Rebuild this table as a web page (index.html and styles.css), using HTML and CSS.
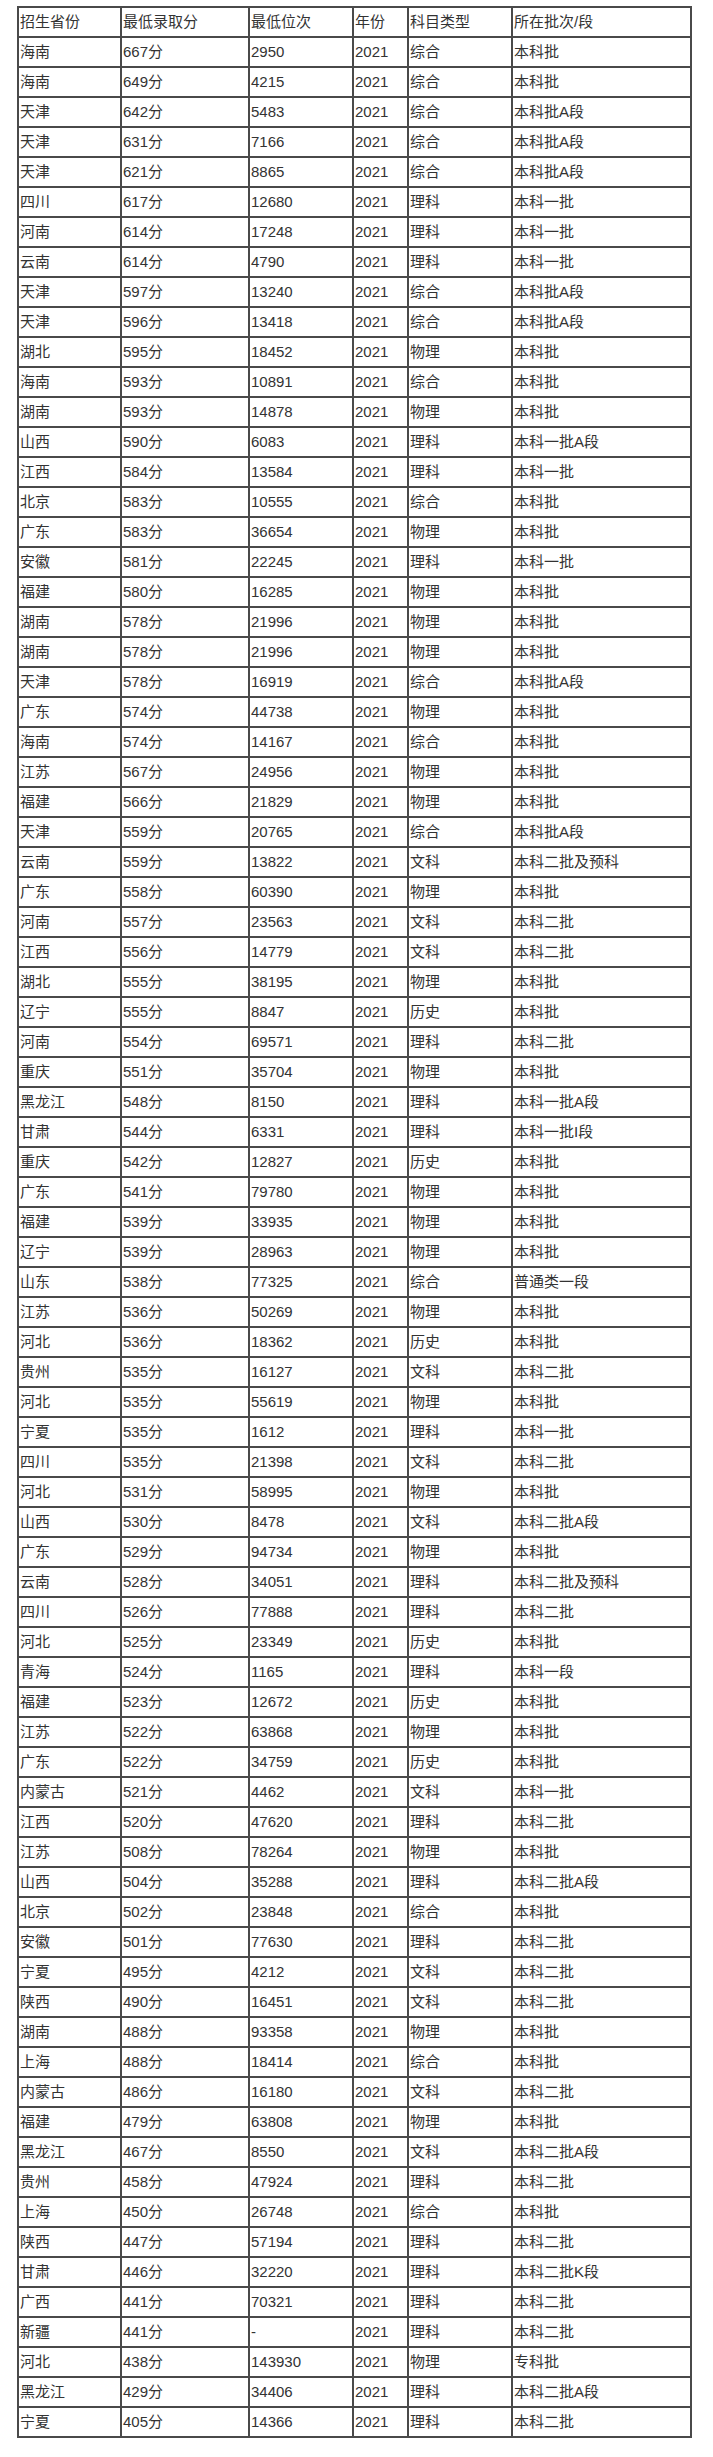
FILE: index.html
```html
<!DOCTYPE html>
<html lang="zh-CN">
<head>
<meta charset="utf-8">
<title>录取分数</title>
<link rel="stylesheet" href="styles.css">
</head>
<body>
<table class="score-table">
<colgroup>
<col class="c1"><col class="c2"><col class="c3"><col class="c4"><col class="c5"><col class="c6">
</colgroup>
<tbody>
<tr><td>招生省份</td><td>最低录取分</td><td>最低位次</td><td>年份</td><td>科目类型</td><td>所在批次/段</td></tr>
<tr><td>海南</td><td>667分</td><td>2950</td><td>2021</td><td>综合</td><td>本科批</td></tr>
<tr><td>海南</td><td>649分</td><td>4215</td><td>2021</td><td>综合</td><td>本科批</td></tr>
<tr><td>天津</td><td>642分</td><td>5483</td><td>2021</td><td>综合</td><td>本科批A段</td></tr>
<tr><td>天津</td><td>631分</td><td>7166</td><td>2021</td><td>综合</td><td>本科批A段</td></tr>
<tr><td>天津</td><td>621分</td><td>8865</td><td>2021</td><td>综合</td><td>本科批A段</td></tr>
<tr><td>四川</td><td>617分</td><td>12680</td><td>2021</td><td>理科</td><td>本科一批</td></tr>
<tr><td>河南</td><td>614分</td><td>17248</td><td>2021</td><td>理科</td><td>本科一批</td></tr>
<tr><td>云南</td><td>614分</td><td>4790</td><td>2021</td><td>理科</td><td>本科一批</td></tr>
<tr><td>天津</td><td>597分</td><td>13240</td><td>2021</td><td>综合</td><td>本科批A段</td></tr>
<tr><td>天津</td><td>596分</td><td>13418</td><td>2021</td><td>综合</td><td>本科批A段</td></tr>
<tr><td>湖北</td><td>595分</td><td>18452</td><td>2021</td><td>物理</td><td>本科批</td></tr>
<tr><td>海南</td><td>593分</td><td>10891</td><td>2021</td><td>综合</td><td>本科批</td></tr>
<tr><td>湖南</td><td>593分</td><td>14878</td><td>2021</td><td>物理</td><td>本科批</td></tr>
<tr><td>山西</td><td>590分</td><td>6083</td><td>2021</td><td>理科</td><td>本科一批A段</td></tr>
<tr><td>江西</td><td>584分</td><td>13584</td><td>2021</td><td>理科</td><td>本科一批</td></tr>
<tr><td>北京</td><td>583分</td><td>10555</td><td>2021</td><td>综合</td><td>本科批</td></tr>
<tr><td>广东</td><td>583分</td><td>36654</td><td>2021</td><td>物理</td><td>本科批</td></tr>
<tr><td>安徽</td><td>581分</td><td>22245</td><td>2021</td><td>理科</td><td>本科一批</td></tr>
<tr><td>福建</td><td>580分</td><td>16285</td><td>2021</td><td>物理</td><td>本科批</td></tr>
<tr><td>湖南</td><td>578分</td><td>21996</td><td>2021</td><td>物理</td><td>本科批</td></tr>
<tr><td>湖南</td><td>578分</td><td>21996</td><td>2021</td><td>物理</td><td>本科批</td></tr>
<tr><td>天津</td><td>578分</td><td>16919</td><td>2021</td><td>综合</td><td>本科批A段</td></tr>
<tr><td>广东</td><td>574分</td><td>44738</td><td>2021</td><td>物理</td><td>本科批</td></tr>
<tr><td>海南</td><td>574分</td><td>14167</td><td>2021</td><td>综合</td><td>本科批</td></tr>
<tr><td>江苏</td><td>567分</td><td>24956</td><td>2021</td><td>物理</td><td>本科批</td></tr>
<tr><td>福建</td><td>566分</td><td>21829</td><td>2021</td><td>物理</td><td>本科批</td></tr>
<tr><td>天津</td><td>559分</td><td>20765</td><td>2021</td><td>综合</td><td>本科批A段</td></tr>
<tr><td>云南</td><td>559分</td><td>13822</td><td>2021</td><td>文科</td><td>本科二批及预科</td></tr>
<tr><td>广东</td><td>558分</td><td>60390</td><td>2021</td><td>物理</td><td>本科批</td></tr>
<tr><td>河南</td><td>557分</td><td>23563</td><td>2021</td><td>文科</td><td>本科二批</td></tr>
<tr><td>江西</td><td>556分</td><td>14779</td><td>2021</td><td>文科</td><td>本科二批</td></tr>
<tr><td>湖北</td><td>555分</td><td>38195</td><td>2021</td><td>物理</td><td>本科批</td></tr>
<tr><td>辽宁</td><td>555分</td><td>8847</td><td>2021</td><td>历史</td><td>本科批</td></tr>
<tr><td>河南</td><td>554分</td><td>69571</td><td>2021</td><td>理科</td><td>本科二批</td></tr>
<tr><td>重庆</td><td>551分</td><td>35704</td><td>2021</td><td>物理</td><td>本科批</td></tr>
<tr><td>黑龙江</td><td>548分</td><td>8150</td><td>2021</td><td>理科</td><td>本科一批A段</td></tr>
<tr><td>甘肃</td><td>544分</td><td>6331</td><td>2021</td><td>理科</td><td>本科一批I段</td></tr>
<tr><td>重庆</td><td>542分</td><td>12827</td><td>2021</td><td>历史</td><td>本科批</td></tr>
<tr><td>广东</td><td>541分</td><td>79780</td><td>2021</td><td>物理</td><td>本科批</td></tr>
<tr><td>福建</td><td>539分</td><td>33935</td><td>2021</td><td>物理</td><td>本科批</td></tr>
<tr><td>辽宁</td><td>539分</td><td>28963</td><td>2021</td><td>物理</td><td>本科批</td></tr>
<tr><td>山东</td><td>538分</td><td>77325</td><td>2021</td><td>综合</td><td>普通类一段</td></tr>
<tr><td>江苏</td><td>536分</td><td>50269</td><td>2021</td><td>物理</td><td>本科批</td></tr>
<tr><td>河北</td><td>536分</td><td>18362</td><td>2021</td><td>历史</td><td>本科批</td></tr>
<tr><td>贵州</td><td>535分</td><td>16127</td><td>2021</td><td>文科</td><td>本科二批</td></tr>
<tr><td>河北</td><td>535分</td><td>55619</td><td>2021</td><td>物理</td><td>本科批</td></tr>
<tr><td>宁夏</td><td>535分</td><td>1612</td><td>2021</td><td>理科</td><td>本科一批</td></tr>
<tr><td>四川</td><td>535分</td><td>21398</td><td>2021</td><td>文科</td><td>本科二批</td></tr>
<tr><td>河北</td><td>531分</td><td>58995</td><td>2021</td><td>物理</td><td>本科批</td></tr>
<tr><td>山西</td><td>530分</td><td>8478</td><td>2021</td><td>文科</td><td>本科二批A段</td></tr>
<tr><td>广东</td><td>529分</td><td>94734</td><td>2021</td><td>物理</td><td>本科批</td></tr>
<tr><td>云南</td><td>528分</td><td>34051</td><td>2021</td><td>理科</td><td>本科二批及预科</td></tr>
<tr><td>四川</td><td>526分</td><td>77888</td><td>2021</td><td>理科</td><td>本科二批</td></tr>
<tr><td>河北</td><td>525分</td><td>23349</td><td>2021</td><td>历史</td><td>本科批</td></tr>
<tr><td>青海</td><td>524分</td><td>1165</td><td>2021</td><td>理科</td><td>本科一段</td></tr>
<tr><td>福建</td><td>523分</td><td>12672</td><td>2021</td><td>历史</td><td>本科批</td></tr>
<tr><td>江苏</td><td>522分</td><td>63868</td><td>2021</td><td>物理</td><td>本科批</td></tr>
<tr><td>广东</td><td>522分</td><td>34759</td><td>2021</td><td>历史</td><td>本科批</td></tr>
<tr><td>内蒙古</td><td>521分</td><td>4462</td><td>2021</td><td>文科</td><td>本科一批</td></tr>
<tr><td>江西</td><td>520分</td><td>47620</td><td>2021</td><td>理科</td><td>本科二批</td></tr>
<tr><td>江苏</td><td>508分</td><td>78264</td><td>2021</td><td>物理</td><td>本科批</td></tr>
<tr><td>山西</td><td>504分</td><td>35288</td><td>2021</td><td>理科</td><td>本科二批A段</td></tr>
<tr><td>北京</td><td>502分</td><td>23848</td><td>2021</td><td>综合</td><td>本科批</td></tr>
<tr><td>安徽</td><td>501分</td><td>77630</td><td>2021</td><td>理科</td><td>本科二批</td></tr>
<tr><td>宁夏</td><td>495分</td><td>4212</td><td>2021</td><td>文科</td><td>本科二批</td></tr>
<tr><td>陕西</td><td>490分</td><td>16451</td><td>2021</td><td>文科</td><td>本科二批</td></tr>
<tr><td>湖南</td><td>488分</td><td>93358</td><td>2021</td><td>物理</td><td>本科批</td></tr>
<tr><td>上海</td><td>488分</td><td>18414</td><td>2021</td><td>综合</td><td>本科批</td></tr>
<tr><td>内蒙古</td><td>486分</td><td>16180</td><td>2021</td><td>文科</td><td>本科二批</td></tr>
<tr><td>福建</td><td>479分</td><td>63808</td><td>2021</td><td>物理</td><td>本科批</td></tr>
<tr><td>黑龙江</td><td>467分</td><td>8550</td><td>2021</td><td>文科</td><td>本科二批A段</td></tr>
<tr><td>贵州</td><td>458分</td><td>47924</td><td>2021</td><td>理科</td><td>本科二批</td></tr>
<tr><td>上海</td><td>450分</td><td>26748</td><td>2021</td><td>综合</td><td>本科批</td></tr>
<tr><td>陕西</td><td>447分</td><td>57194</td><td>2021</td><td>理科</td><td>本科二批</td></tr>
<tr><td>甘肃</td><td>446分</td><td>32220</td><td>2021</td><td>理科</td><td>本科二批K段</td></tr>
<tr><td>广西</td><td>441分</td><td>70321</td><td>2021</td><td>理科</td><td>本科二批</td></tr>
<tr><td>新疆</td><td>441分</td><td>-</td><td>2021</td><td>理科</td><td>本科二批</td></tr>
<tr><td>河北</td><td>438分</td><td>143930</td><td>2021</td><td>物理</td><td>专科批</td></tr>
<tr><td>黑龙江</td><td>429分</td><td>34406</td><td>2021</td><td>理科</td><td>本科二批A段</td></tr>
<tr><td>宁夏</td><td>405分</td><td>14366</td><td>2021</td><td>理科</td><td>本科二批</td></tr>
</tbody>
</table>
</body>
</html>
```

FILE: styles.css
```css
html, body {
  margin: 0;
  padding: 0;
  background: #ffffff;
}

body {
  padding: 6px 0 0 17px;
  font-family: "Liberation Sans", Arial, "Noto Sans CJK SC", sans-serif;
  font-size: 15px;
  color: #333333;
}

.score-table {
  border-collapse: separate;
  border-spacing: 0;
  border: 1px solid #4a4a4a;
  table-layout: fixed;
  width: 675px;
}

.score-table .c1 { width: 103px; }
.score-table .c2 { width: 128px; }
.score-table .c3 { width: 104px; }
.score-table .c4 { width: 55px; }
.score-table .c5 { width: 104px; }
.score-table .c6 { width: 179px; }

.score-table td {
  box-sizing: border-box;
  height: 30px;
  padding: 0 0 0 1px;
  border: 1px solid #4a4a4a;
  line-height: 20px;
  vertical-align: middle;
  text-align: left;
  white-space: nowrap;
  overflow: hidden;
}
```
